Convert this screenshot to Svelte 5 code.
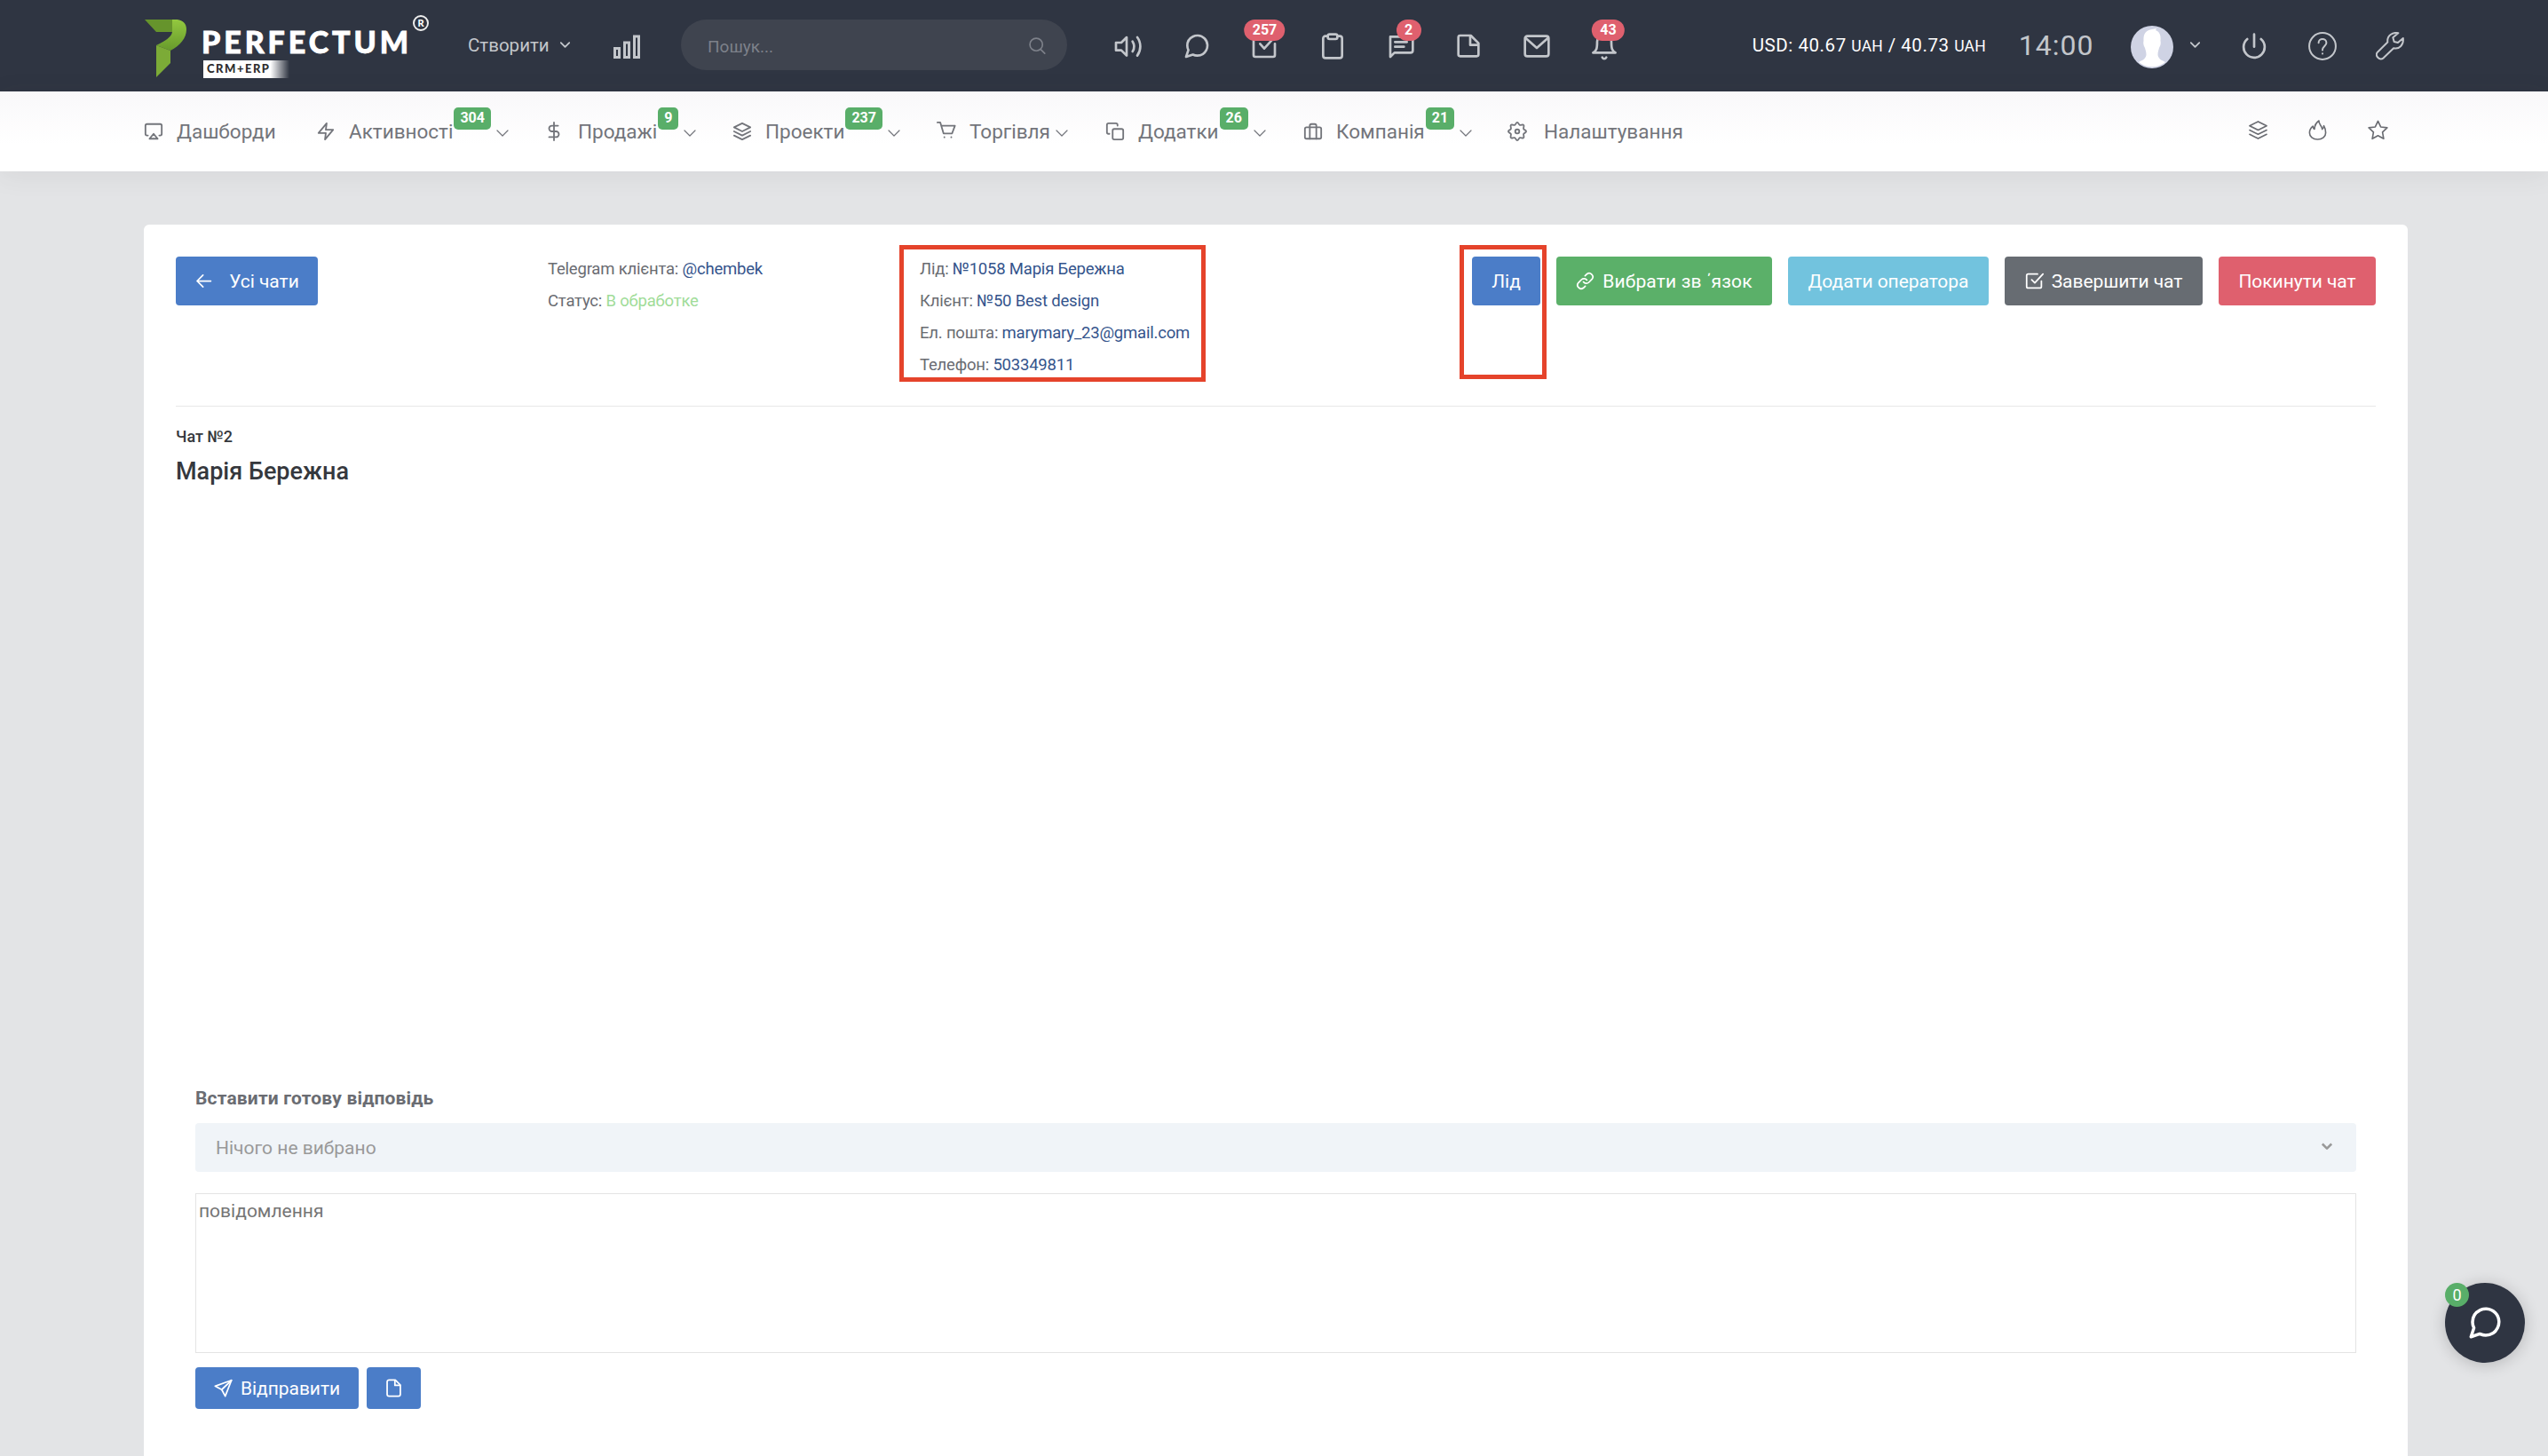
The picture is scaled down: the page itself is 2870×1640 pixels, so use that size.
<script lang="ts">
  type NavItem = { label: string; icon: string; count?: number; menu?: boolean };

  const icons: Record<string, string[]> = {
    airplay: ["M5 17H4a2 2 0 0 1-2-2V5a2 2 0 0 1 2-2h16a2 2 0 0 1 2 2v10a2 2 0 0 1-2 2h-1", "M12 15l5 6H7z"],
    zap: ["M13 2L3 14h9l-1 8 10-12h-9z"],
    dollar: ["M12 1v22", "M17 5H9.5a3.5 3.5 0 0 0 0 7h5a3.5 3.5 0 0 1 0 7H6"],
    layers: ["M12 2L2 7l10 5 10-5z", "M2 17l10 5 10-5", "M2 12l10 5 10-5"],
    cart: ["M1 1h3.5l4 13.500h10.500l3.500-9.500H6", "M9.500 19v.3", "M18 19v.3"],
    copy: ["M11 9h9a2 2 0 0 1 2 2v9a2 2 0 0 1-2 2h-9a2 2 0 0 1-2-2v-9a2 2 0 0 1 2-2z", "M5 15H4a2 2 0 0 1-2-2V4a2 2 0 0 1 2-2h9a2 2 0 0 1 2 2v1"],
    briefcase: ["M4 7h16a2 2 0 0 1 2 2v10a2 2 0 0 1-2 2H4a2 2 0 0 1-2-2V9a2 2 0 0 1 2-2z", "M16 21V5a2 2 0 0 0-2-2h-4a2 2 0 0 0-2 2v16"],
    gear: [
      "M12 9.500a2.500 2.500 0 1 0 0 5a2.500 2.500 0 1 0 0-5z",
      "M12 1c1.600 0 1.700 2.600 3.200 3.200s3.400-1.200 4.600 0-.6 3.100 0 4.600S23 10.400 23 12s-2.600 1.700-3.200 3.200 1.200 3.400 0 4.600-3.100-.6-4.600 0S13.600 23 12 23s-1.700-2.600-3.200-3.200-3.400 1.200-4.600 0 .6-3.100 0-4.600S1 13.600 1 12s2.600-1.700 3.200-3.200-1.200-3.400 0-4.600 3.100.6 4.600 0S10.400 1 12 1z",
    ],
    flame: ["M13.500 1c-3 2-5 4.500-5.200 10-1-.7-1.700-2-1.900-3.500C3.500 10 2.500 12.500 2.500 15c0 4.700 3.900 8 9.500 8s9.500-3.300 9.500-8c0-3.500-1-6-2.200-8-.2 2-.8 3.300-1.900 4C17.200 6.500 13 5.500 13.500 1z"],
    star: ["M12 1.500l3.200 6.800 7.600 1-5.500 5.200 1.400 7.700L12 18.500l-6.700 3.700 1.400-7.700L1.200 9.300l7.600-1z"],
    volume: ["M10.500 4.500L6 9H1.500v6.500H6l4.500 4.500z", "M15.500 8c1.600 2.500 1.600 6 0 8.500", "M19.500 4.500c3.400 4.500 3.400 11 0 15.500"],
    chat: ["M21 11.500a8.380 8.380 0 0 1-.9 3.800 8.500 8.500 0 0 1-7.600 4.700 8.380 8.380 0 0 1-3.800-.9L3 21l1.900-5.700a8.380 8.380 0 0 1-.9-3.800 8.500 8.500 0 0 1 4.700-7.600 8.380 8.380 0 0 1 3.800-.9h.5a8.480 8.480 0 0 1 8 8z"],
    task: ["M8.500 10l3.500 4 9-10", "M21 10v9.500a1.500 1.500 0 0 1-1.500 1.500h-15A1.500 1.500 0 0 1 3 19.500V5"],
    clipboard: ["M16 3.500h2a2 2 0 0 1 2 2V20a2 2 0 0 1-2 2H6a2 2 0 0 1-2-2V5.500a2 2 0 0 1 2-2h2", "M9.500 2h5A1.500 1.500 0 0 1 16 3.500v1A1.500 1.500 0 0 1 14.500 6h-5A1.500 1.500 0 0 1 8 4.500v-1A1.500 1.500 0 0 1 9.500 2z"],
    message: ["M22 4v11.500a2 2 0 0 1-2 2H6.500L3 21V4z", "M7 8.500h10", "M7 12.500h7.500"],
    note: ["M5.500 3H14l6.500 6.500v9.500a1.500 1.500 0 0 1-1.500 1.500H5A1.500 1.500 0 0 1 3.500 19V4.500A1.500 1.500 0 0 1 5 3z", "M13.500 3.500V11h6.500"],
    mail: ["M4 3.500h16a2 2 0 0 1 2 2v13a2 2 0 0 1-2 2H4a2 2 0 0 1-2-2v-13a2 2 0 0 1 2-2z", "M21.500 5L12 13.500 2.500 5"],
    bell: ["M18 8A6 6 0 0 0 6 8c0 6-.5 8-3.500 9.500h19C18.500 16 18 14 18 8", "M10.300 21.500c.9 1.600 2.500 1.600 3.400 0"],
    power: ["M17.800 6a8.900 8.900 0 1 1-11.600 0", "M12 2v10.500"],
    help: ["M12 .8a11.200 11.200 0 1 0 0 22.400a11.200 11.200 0 1 0 0-22.400z", "M8.700 9.200c0-4.200 6.600-4.200 6.600 0 0 2.600-3.300 2.700-3.300 6.200", "M12 18.100v.3"],
    wrench: ["M19 .9c-4.600-.9-9.700 1.800-9 7.700L1.500 17c-2.500 3 1.500 7.500 5 5l8.600-8.300c4.900 1.200 8.600-2.800 8-8.500l-4.400 3.800-3.200-.8-1-3.500z"],
    link: ["M9.800 13.200a4.600 4.600 0 0 0 7 .5l4-4a4.700 4.700 0 0 0-6.600-6.600l-2.300 2.200", "M14.200 10.800a4.600 4.600 0 0 0-7-.5l-4 4a4.700 4.700 0 0 0 6.600 6.600l2.300-2.200"],
    check: ["M8.500 10.500l4 4L23 3", "M21 12v7a2 2 0 0 1-2 2H4a2 2 0 0 1-2-2V5a2 2 0 0 1 2-2h12"],
    send: ["M22.500 2L1.500 9.500l8.500 4.500 4.500 8.500z", "M22.500 2L10 14"],
    file: ["M14 1.500H6a2.500 2.500 0 0 0-2.500 2.500v16A2.500 2.500 0 0 0 6 22.500h12a2.500 2.500 0 0 0 2.500-2.500V8z", "M13.500 2v6.500H20"],
    arrow: ["M21 12H4", "M11 4.500L3.500 12l7.500 7.500"],
    search: ["M11 2.500a8.500 8.500 0 1 0 0 17a8.500 8.500 0 1 0 0-17z", "M17 17.500l5.500 5.500"],
  };

  const tools = [
    { icon: "volume" },
    { icon: "chat" },
    { icon: "task", count: 257 },
    { icon: "clipboard" },
    { icon: "message", count: 2 },
    { icon: "note" },
    { icon: "mail" },
    { icon: "bell", count: 43 },
  ];

  const nav: NavItem[] = [
    { label: "Дашборди", icon: "airplay" },
    { label: "Активності", icon: "zap", count: 304, menu: true },
    { label: "Продажі", icon: "dollar", count: 9, menu: true },
    { label: "Проекти", icon: "layers", count: 237, menu: true },
    { label: "Торгівля", icon: "cart", menu: true },
    { label: "Додатки", icon: "copy", count: 26, menu: true },
    { label: "Компанія", icon: "briefcase", count: 21, menu: true },
    { label: "Налаштування", icon: "gear" },
  ];

  const contacts = [
    ["Лід", "№1058 Марія Бережна"],
    ["Клієнт", "№50 Best design"],
    ["Ел. пошта", "marymary_23@gmail.com"],
    ["Телефон", "503349811"],
  ];
</script>

{#snippet icon(name: string)}
  <svg class="icon" viewBox="0 0 24 24">
    {#each icons[name] as d}
      <path {d} />
    {/each}
  </svg>
{/snippet}

{#snippet chevron()}
  <svg class="chevron" viewBox="0 0 14 8"><path d="M1 1l6 6 6-6" /></svg>
{/snippet}

<div class="page">
  <header class="topbar">
    <a class="logo" href="#home">
      <svg class="logo-mark" viewBox="0 0 47 65">
        <defs>
          <linearGradient id="fold" x1="0" y1="0" x2="0" y2="1">
            <stop offset="0" stop-color="#93c83f" />
            <stop offset="1" stop-color="#679a2c" />
          </linearGradient>
        </defs>
        <path fill="#66942c" d="M0 0h35v14H13z" />
        <path fill="url(#fold)" d="M31 0c10-1 16 3 16 11 0 10-7 18-18 24l-16-6c10-5 17-9 18-15z" />
        <path fill="#7cab37" d="M13 29l16 6v14L13 65z" />
      </svg>
      <span class="logo-text">
        <span class="logo-name">PERFECTUM</span>
        <span class="logo-sub">CRM+ERP</span>
      </span>
      <span class="logo-reg">R</span>
    </a>
    <button class="create">Створити {@render chevron()}</button>
    <svg class="bars" viewBox="0 0 30 28">
      <path d="M1.500 15.500h5v10h-5zM12.500 9h5v16.500h-5zM23.500 2h5v23.500h-5z" />
    </svg>
    <div class="search">
      <span>Пошук...</span>
      {@render icon("search")}
    </div>
    <div class="tools">
      {#each tools as tool}
        <span class="tool">
          {@render icon(tool.icon)}
          {#if tool.count}<b class="pill">{tool.count}</b>{/if}
        </span>
      {/each}
    </div>
    <div class="rate">USD: 40.67 <small>UAH</small> / 40.73 <small>UAH</small></div>
    <div class="clock">14:00</div>
    <div class="user">
      <svg class="avatar" viewBox="0 0 48 48">
        <circle cx="24" cy="24" r="24" fill="#cfd3e4" />
        <path fill="#fff" d="M24 4l5-1-1 2c5 2 6 6 5.500 12 .8 4-.5 6-1.500 8-.8 3-1.500 4-1.500 8 1 5 5 6 8.500 8A24 24 0 0 1 9 41c3.500-2 7.500-3 8.500-8 0-4-.7-5-1.500-8-1-2-2.300-4-1.500-8C14 9 17 5 24 4z" />
      </svg>
      {@render chevron()}
    </div>
    <div class="system">
      <span class="tool">{@render icon("power")}</span>
      <span class="tool thin">{@render icon("help")}</span>
      <span class="tool thin">{@render icon("wrench")}</span>
    </div>
  </header>

  <nav class="navbar">
    <div class="menu">
      {#each nav as item}
        <a class="item" href="#menu">
          <span class="item-icon">{@render icon(item.icon)}</span>
          <span>{item.label}</span>
          {#if item.count}<b class="tag">{item.count}</b>{/if}
          {#if item.menu}{@render chevron()}{/if}
        </a>
      {/each}
    </div>
    <div class="shortcuts">
      {#each ["layers", "flame", "star"] as name}
        <span>{@render icon(name)}</span>
      {/each}
    </div>
  </nav>

  <main class="card">
    <section class="head">
      <div class="back">
        <button class="btn blue">{@render icon("arrow")}Усі чати</button>
      </div>
      <div class="info">
        <p>Telegram клієнта: <a href="#telegram">@chembek</a></p>
        <p>Статус: <span class="status">В обработке</span></p>
      </div>
      <div class="info marked">
        {#each contacts as [label, value]}
          <p>{label}: <a href="#contact">{value}</a></p>
        {/each}
      </div>
      <div class="actions">
        <div class="lead"><button class="btn blue">Лід</button></div>
        <button class="btn green">{@render icon("link")}Вибрати зв ΄язок</button>
        <button class="btn cyan">Додати оператора</button>
        <button class="btn gray">{@render icon("check")}Завершити чат</button>
        <button class="btn red">Покинути чат</button>
      </div>
    </section>

    <h4>Чат №2</h4>
    <h2>Марія Бережна</h2>

    <section class="reply">
      <div class="label">Вставити готову відповідь</div>
      <div class="select">
        <span>Нічого не вибрано</span>
        {@render chevron()}
      </div>
      <textarea placeholder="повідомлення"></textarea>
      <div class="send">
        <button class="btn blue">{@render icon("send")}Відправити</button>
        <button class="btn blue attach" aria-label="Файл">{@render icon("file")}</button>
      </div>
    </section>
  </main>

  <div class="fab">
    {@render icon("chat")}
    <span class="fab-count">0</span>
  </div>
</div>

<style>
  :global(body) {
    background: #e3e4e6;
  }
  .page,
  .page :global(*) {
    box-sizing: border-box;
  }
  .page {
    position: relative;
    display: flex;
    flex-direction: column;
    height: 1640px;
    overflow: hidden;
    font-family: Roboto, "Noto Sans", sans-serif;
    font-size: 21px;
    color: #6a6c72;
    white-space: nowrap;
  }
  a {
    color: #34548c;
    text-decoration: none;
  }
  button {
    border: 0;
    padding: 0;
    font: inherit;
    letter-spacing: inherit;
    color: inherit;
    background: none;
  }
  .icon,
  .chevron,
  .bars {
    display: block;
    flex: none;
    fill: none;
    stroke: currentColor;
    stroke-width: 2;
    stroke-linecap: round;
    stroke-linejoin: round;
  }
  .icon {
    width: 22px;
    height: 22px;
  }

  /* top bar */
  .topbar {
    display: flex;
    align-items: center;
    flex: none;
    height: 103px;
    padding: 0 0 2px 163px;
    background: #2f3542;
    color: #c3c6cb;
  }
  .logo {
    display: flex;
    width: 364px;
    height: 101px;
    padding-top: 22px;
    color: #fff;
  }
  .logo-mark {
    width: 47px;
    height: 65px;
  }
  .logo-text {
    display: flex;
    flex-direction: column;
    width: 237px;
    margin-left: 18px;
    padding-top: 8px;
  }
  .logo-name {
    height: 38px;
    margin-left: -1px;
    font: 900 34px/34px Lato, sans-serif;
    letter-spacing: 3.900px;
    -webkit-text-stroke: 0.800px #fff;
  }
  .logo-sub {
    width: 97px;
    height: 20px;
    margin-left: 1px;
    padding-left: 4px;
    background: linear-gradient(90deg, #fff 78%, transparent);
    color: #2d2d2d;
    font: 900 13px/19px Lato, sans-serif;
    letter-spacing: 1.500px;
  }
  .logo-reg {
    width: 18px;
    height: 18px;
    margin-top: -5px;
    border: 2px solid #eee;
    border-radius: 50%;
    font: 900 11px/14px Lato, sans-serif;
    text-align: center;
  }
  .create {
    display: flex;
    align-items: center;
    gap: 12px;
    width: 164px;
    font-size: 20.500px;
  }
  .create .chevron,
  .user .chevron {
    width: 11px;
    height: 7px;
    stroke-width: 2.400;
  }
  .bars {
    width: 30px;
    height: 28px;
    margin-top: 4px;
    stroke-width: 3;
    stroke-linejoin: miter;
  }
  .search {
    display: flex;
    align-items: center;
    justify-content: space-between;
    width: 435px;
    height: 57px;
    margin: 0 31px 0 46px;
    padding: 3px 24px 0 30px;
    border-radius: 29px;
    background: #3f444f;
    color: #7d818a;
    font-size: 19px;
  }
  .search .icon {
    width: 20px;
    height: 20px;
    margin-top: -2px;
  }
  .tools,
  .system {
    display: flex;
  }
  .tool {
    position: relative;
    display: flex;
    justify-content: center;
    width: 76.600px;
  }
  .tool .icon {
    width: 32px;
    height: 32px;
    margin-top: 3px;
  }
  .tool.thin .icon {
    stroke-width: 1.500;
  }
  .pill {
    position: absolute;
    left: 50%;
    top: -11px;
    min-width: 28px;
    height: 24px;
    padding: 0 9px;
    border-radius: 12px;
    background: #df606e;
    color: #fff;
    font-size: 16px;
    line-height: 24px;
    text-align: center;
    transform: translateX(-50%);
  }
  .tool:nth-child(5) .pill {
    margin-left: 9px;
  }
  .tool:nth-child(8) .pill {
    margin-left: 4px;
  }
  .rate {
    width: 300px;
    margin-left: 128px;
    color: #fff;
    font-size: 20.500px;
    letter-spacing: 0.550px;
  }
  .rate small {
    font-size: 17.500px;
    letter-spacing: 0.200px;
  }
  .clock {
    width: 126px;
    font-size: 32px;
    letter-spacing: 1px;
  }
  .user {
    display: flex;
    align-items: center;
    gap: 19px;
    width: 101px;
  }
  .avatar {
    width: 48px;
    height: 48px;
    margin-top: 5px;
  }

  /* main navigation */
  .navbar {
    display: flex;
    justify-content: space-between;
    flex: none;
    height: 90px;
    padding: 0 158px 0 162px;
    background: linear-gradient(#f9f8fa, #fff 60px);
    box-shadow: 0 4px 28px rgba(60, 60, 60, 0.08);
  }
  .menu {
    display: grid;
    grid-template-columns: 194px 261px 208px 230px 190px 223px 230px auto;
  }
  .item {
    display: flex;
    align-items: center;
    color: #73757b;
    font-size: 22.500px;
  }
  .item-icon {
    width: 37px;
  }
  .item:nth-child(3) .item-icon {
    width: 35px;
    margin-left: -4px;
    margin-right: 3px;
  }
  .item:last-child .item-icon {
    width: 41px;
  }
  .tag {
    height: 25px;
    margin: -30px 0 0 1px;
    padding: 0 7px;
    border-radius: 5px;
    background: #59ae69;
    color: #fff;
    font-size: 16px;
    line-height: 24px;
  }
  .item .chevron {
    width: 14px;
    height: 8px;
    margin: 3px 0 0 6px;
    stroke-width: 1.200;
  }
  .shortcuts {
    display: flex;
    align-items: center;
  }
  .shortcuts span {
    display: flex;
    justify-content: center;
    width: 67.500px;
  }
  .shortcuts .icon {
    width: 23px;
    height: 23px;
    margin-top: -3px;
    stroke-width: 1.700;
  }

  /* chat card */
  .card {
    flex: 1;
    margin: 60px 158px 0 162px;
    padding: 0 36px;
    border-radius: 6px 6px 0 0;
    background: #fff;
  }
  .head {
    display: grid;
    grid-template-columns: 419px 419px 1fr auto;
    height: 205px;
    padding-top: 31px;
    border-bottom: 1px solid #e8e8e8;
  }
  .info {
    position: relative;
    padding-top: 1px;
    font-size: 18.500px;
    line-height: 36px;
    letter-spacing: -0.200px;
  }
  .info p {
    margin: 0;
  }
  .status {
    color: #a0dc98;
  }
  .marked::after,
  .lead::after {
    content: "";
    position: absolute;
    box-sizing: border-box;
    border: 5px solid #e5432b;
  }
  .marked::after {
    left: -23px;
    top: -8px;
    width: 345px;
    height: 154px;
  }
  .lead {
    position: relative;
  }
  .lead::after {
    left: -14px;
    top: -13px;
    width: 98px;
    height: 151px;
  }
  .back,
  .actions {
    display: flex;
    gap: 18px;
    padding-top: 5px;
  }
  .btn {
    display: flex;
    align-items: center;
    justify-content: center;
    height: 55px;
    padding: 0 22px;
    border-radius: 4px;
    color: #fff;
    font-size: 21px;
    letter-spacing: -0.040px;
  }
  .btn .icon {
    width: 21px;
    height: 21px;
    margin-right: 9px;
  }
  .back .btn {
    width: 160px;
  }
  .back .icon {
    margin-right: 18px;
  }
  .blue {
    background: #4b7dc8;
  }
  .green {
    width: 243px;
    background: #5bb069;
    letter-spacing: 0.150px;
  }
  .cyan {
    width: 226px;
    background: #72c3de;
  }
  .gray {
    width: 223px;
    background: #676c72;
  }
  .red {
    width: 177px;
    background: #df606e;
  }
  .lead .btn {
    width: 77px;
  }
  h4,
  h2 {
    margin: 0;
    color: #35383d;
    font-weight: 500;
  }
  h4 {
    margin-top: 22px;
    font-size: 18px;
    line-height: 24px;
  }
  h2 {
    margin-top: 7px;
    font-size: 27px;
    line-height: 40px;
  }

  /* reply form */
  .reply {
    margin-top: 671px;
    padding: 0 22px;
  }
  .label {
    font-weight: 700;
    line-height: 30px;
    letter-spacing: 0.170px;
  }
  .select {
    display: flex;
    align-items: center;
    justify-content: space-between;
    height: 55px;
    margin-top: 13px;
    padding: 0 27px 0 23px;
    border-radius: 4px;
    background: #f0f4f8;
    color: #999;
  }
  .select .chevron {
    width: 12px;
    height: 8px;
    margin-top: -3px;
    stroke-width: 3;
    stroke-linecap: butt;
  }
  textarea {
    display: block;
    width: 100%;
    height: 180px;
    margin-top: 24px;
    padding: 7px 3px;
    border: 1px solid #e4e4e4;
    background: #fff;
    font: inherit;
    resize: none;
  }
  textarea::placeholder {
    color: #757575;
  }
  .send {
    display: flex;
    gap: 9px;
    margin-top: 16px;
  }
  .send .btn {
    width: 184px;
    height: 47px;
  }
  .send .attach {
    width: 61px;
  }
  .send .attach .icon {
    margin: 0;
  }

  .fab {
    position: absolute;
    right: 26px;
    bottom: 105px;
    display: flex;
    align-items: center;
    justify-content: center;
    width: 90px;
    height: 90px;
    border-radius: 50%;
    background: #2f3542;
    color: #fff;
    box-shadow: 0 2px 18px rgba(0, 0, 0, 0.2);
  }
  .fab .icon {
    width: 42px;
    height: 42px;
  }
  .fab-count {
    position: absolute;
    left: 0;
    top: 0;
    width: 27px;
    height: 27px;
    border-radius: 50%;
    background: #59ae69;
    font-size: 18px;
    line-height: 27px;
    text-align: center;
  }
</style>
